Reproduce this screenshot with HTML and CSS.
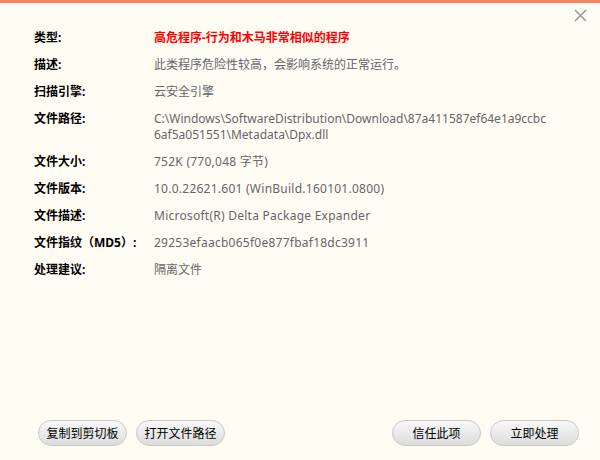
FILE: index.html
```html
<!DOCTYPE html>
<html lang="zh-CN">
<head>
    <meta charset="UTF-8">
    <title>文件详情</title>
    <link rel="stylesheet" href="styles.css">
</head>

<body>

    <div class="dialog">
        <button class="close" title="关闭">
            <svg width="13" height="13" viewBox="0 0 13 13"><path d="M1 1L12 12M12 1L1 12" stroke="#9a9a9a" stroke-width="1.6" fill="none"/></svg>
        </button>

        <div class="details">
            <div class="row">
                <div class="label">类型:</div>
                <div class="value danger">高危程序-行为和木马非常相似的程序</div>
            </div>
            <div class="row">
                <div class="label">描述:</div>
                <div class="value">此类程序危险性较高，会影响系统的正常运行。</div>
            </div>
            <div class="row">
                <div class="label">扫描引擎:</div>
                <div class="value">云安全引擎</div>
            </div>
            <div class="row">
                <div class="label">文件路径:</div>
                <div class="value path">C:\Windows\SoftwareDistribution\Download\87a411587ef64e1a9ccbc6af5a051551\Metadata\Dpx.dll</div>
            </div>
            <div class="row">
                <div class="label">文件大小:</div>
                <div class="value latin">752K (770,048 字节)</div>
            </div>
            <div class="row">
                <div class="label">文件版本:</div>
                <div class="value latin">10.0.22621.601 (WinBuild.160101.0800)</div>
            </div>
            <div class="row">
                <div class="label">文件描述:</div>
                <div class="value latin">Microsoft(R) Delta Package Expander</div>
            </div>
            <div class="row">
                <div class="label">文件指纹（MD5）:</div>
                <div class="value latin">29253efaacb065f0e877fbaf18dc3911</div>
            </div>
            <div class="row">
                <div class="label">处理建议:</div>
                <div class="value">隔离文件</div>
            </div>
        </div>

        <div class="actions">
            <button class="btn">复制到剪切板</button>
            <button class="btn">打开文件路径</button>
            <div class="spacer"></div>
            <button class="btn">信任此项</button>
            <button class="btn">立即处理</button>
        </div>
    </div>

</body>
</html>
```

FILE: styles.css
```css
html, body {
    margin: 0;
    height: 100%;
}
body {
    font-family: "Noto Sans", "Noto Sans CJK SC", sans-serif;
    font-size: 12px;
    background-color: #fffcf4;
    color: #666;
}
.dialog {
    position: relative;
    height: 100%;
    box-sizing: border-box;
    border-top: 3px solid #f7845d;
    display: flex;
    flex-direction: column;
}
.close {
    position: absolute;
    top: 6px;
    right: 13px;
    padding: 0;
    border: none;
    background: none;
    cursor: pointer;
    line-height: 0;
}
.details {
    padding: 21px 50px 0 34px;
}
.row {
    display: flex;
    padding: 6px 0 5px;
    line-height: 16px;
}
.label {
    width: 120px;
    flex-shrink: 0;
    color: #000;
    font-weight: bold;
}
.value {
    flex: 1;
}
.value.latin {
    letter-spacing: 0.25px;
}
.value.danger {
    color: #f00;
    font-weight: bold;
}
.value.path {
    word-break: break-all;
}
.actions {
    margin-top: auto;
    display: flex;
    gap: 9px;
    padding: 0 21px 14px 38px;
}
.spacer {
    flex: 1;
}
.btn {
    width: 89px;
    height: 26px;
    padding: 0;
    border: 1px solid #c9c9c9;
    border-radius: 13px;
    background: linear-gradient(#f8f8f8, #dcdcdc);
    font-family: inherit;
    font-size: 12px;
    color: #000;
    cursor: pointer;
}
```
